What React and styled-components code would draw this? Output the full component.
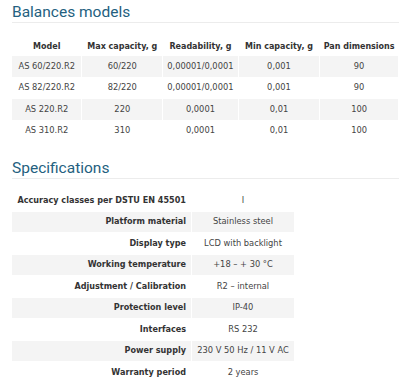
import React from "react";
import styled, { createGlobalStyle } from "styled-components";

const Global = createGlobalStyle`
  html, body { margin: 0; padding: 0; background: #fff; }
  body { font-family: "DejaVu Sans", Verdana, sans-serif; }
`;

const Page = styled.div`
  width: 404px;
  padding: 0 5px 0 12px;
  box-sizing: border-box;
`;

const Heading = styled.h2`
  margin: ${p => p.$top || 0}px 0 ${p => p.$gap || 14}px 0;
  padding: 3px 0 0 0;
  font-family: Roboto, "Noto Sans", sans-serif;
  font-weight: 400;
  font-size: 15.5px;
  line-height: 19px;
  color: #245f80;
  border-bottom: 1px solid #ececec;
`;

const Table = styled.table`
  border-collapse: separate;
  border-spacing: 1px;
  margin-left: -1px;
  font-size: 8.3px;
  line-height: 11px;
  color: #444;
  table-layout: fixed;
`;

const Th = styled.th`
  font-weight: bold;
  font-size: 8px;
  color: #333;
  height: 17px;
  padding: 0;
  text-align: center;
  white-space: nowrap;
`;

const Row = styled.tr`
  background: ${p => (p.$striped ? "#f4f4f4" : "transparent")};
`;

const Td = styled.td`
  height: 20.5px;
  padding: 0;
  text-align: center;
  white-space: nowrap;
`;

const Label = styled.td`
  height: 20.5px;
  padding: 0 5px 0 0;
  text-align: right;
  font-weight: bold;
  font-size: 8.1px;
  color: #333;
  white-space: nowrap;
`;

const models = [
  ["AS 60/220.R2", "60/220", "0,00001/0,0001", "0,001", "90"],
  ["AS 82/220.R2", "82/220", "0,00001/0,0001", "0,001", "90"],
  ["AS 220.R2", "220", "0,0001", "0,01", "100"],
  ["AS 310.R2", "310", "0,0001", "0,01", "100"],
];

const specs = [
  ["Accuracy classes per DSTU EN 45501", "I"],
  ["Platform material", "Stainless steel"],
  ["Display type", "LCD with backlight"],
  ["Working temperature", "+18 – + 30 °C"],
  ["Adjustment / Calibration", "R2 – internal"],
  ["Protection level", "IP-40"],
  ["Interfaces", "RS 232"],
  ["Power supply", "230 V 50 Hz / 11 V AC"],
  ["Warranty period", "2 years"],
];

const colW = [70, 80, 75, 81, 78];

export default function App() {
  return (
    <Page>
      <Global />
      <Heading $gap={14}>Balances models</Heading>
      <Table>
        <colgroup>
          {colW.map((w, i) => <col key={i} style={{ width: w }} />)}
        </colgroup>
        <thead>
          <tr>
            <Th>Model</Th>
            <Th>Max capacity, g</Th>
            <Th>Readability, g</Th>
            <Th>Min capacity, g</Th>
            <Th>Pan dimensions</Th>
          </tr>
        </thead>
        <tbody>
          {models.map((r, i) => (
            <Row key={i} $striped={i % 2 === 0}>
              {r.map((c, j) => <Td key={j}>{c}</Td>)}
            </Row>
          ))}
        </tbody>
      </Table>
      <Heading $top={14} $gap={10}>Specifications</Heading>
      <Table>
        <colgroup>
          <col style={{ width: 179 }} />
          <col style={{ width: 102 }} />
        </colgroup>
        <tbody>
          {specs.map((r, i) => (
            <Row key={i} $striped={i % 2 === 1}>
              <Label>{r[0]}</Label>
              <Td>{r[1]}</Td>
            </Row>
          ))}
        </tbody>
      </Table>
    </Page>
  );
}
